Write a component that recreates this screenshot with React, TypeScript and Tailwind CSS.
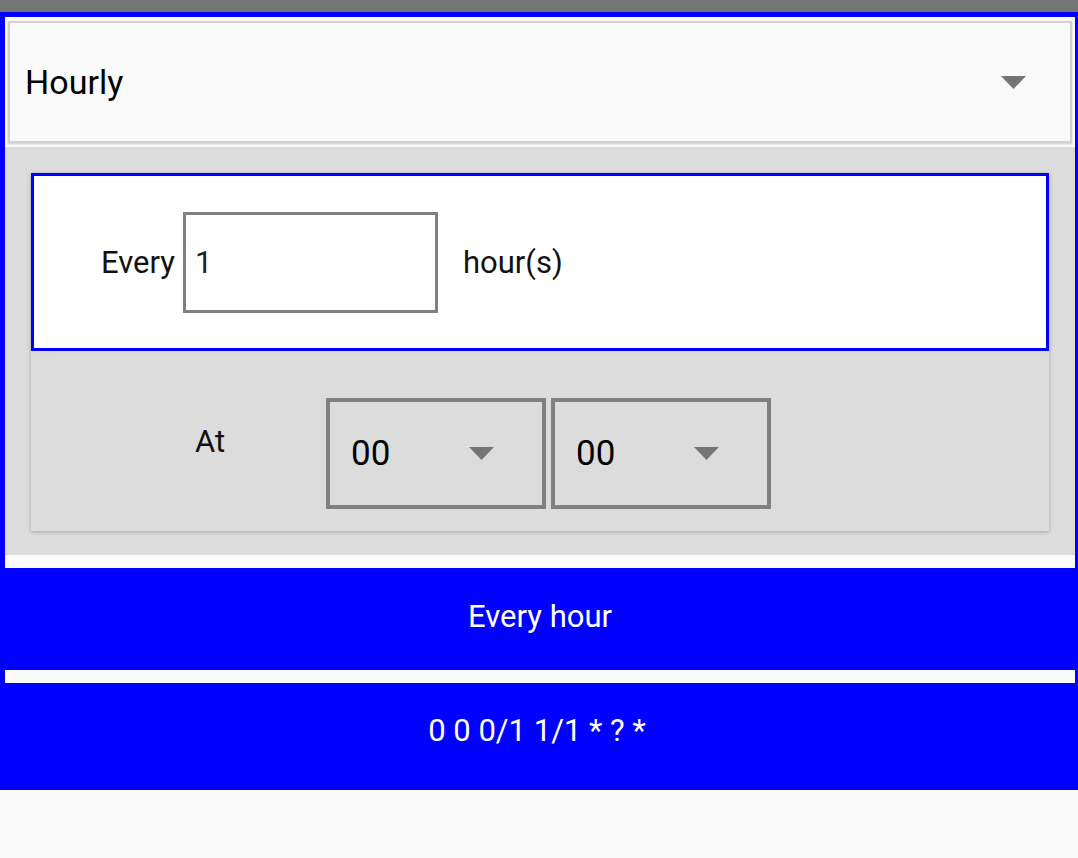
import React from "react";

function Caret({ className }: { className?: string }) {
  return (
    <svg width="25" height="13" viewBox="0 0 25 13" className={className}>
      <polygon points="0,0 25,0 12.5,13" fill="#757575" />
    </svg>
  );
}

export default function App() {
  return (
    <div className="min-h-[858px] w-[1078px] overflow-hidden bg-[#fafafa]" style={{ fontFamily: "Roboto, 'Noto Sans', sans-serif" }}>
      <div className="h-[12px] bg-[#757575]" />
      <div className="w-[1080px] border-[5px] border-[#0000ff] bg-[#fafafa]">
        {/* select */}
        <div className="px-[3px] pt-[4px] pb-[4px] bg-[#fafafa]">
          <div className="border-[2px] border-[#d0d0d0] shadow-[0_1px_2px_rgba(0,0,0,0.2)]">
            <div className="h-[118px] bg-[#fafafa] flex items-center justify-between pl-[15px] pr-[44px]">
              <span className="text-[34px] text-black leading-none">Hourly</span>
              <Caret />
            </div>
          </div>
        </div>
        {/* gray area */}
        <div className="bg-[#dcdcdc] px-[26px] pt-[26px] pb-[24px]">
          <div className="shadow-[0_1px_4px_rgba(0,0,0,0.25)]">
            <div className="h-[178px] bg-white border-[3px] border-[#0000ff] flex items-center">
              <span className="ml-[67px] text-[31px] text-[#111] leading-none">Every</span>
              <div className="ml-[8px] w-[255px] h-[101px] border-[3px] border-[#808080] bg-white flex items-center pl-[9px]">
                <span className="text-[31px] text-[#222] leading-none">1</span>
              </div>
              <span className="ml-[25px] text-[31px] text-[#111] leading-none">hour(s)</span>
            </div>
            <div className="h-[180px] bg-[#dcdcdc] flex items-start">
              <span className="ml-[164px] mt-[75px] text-[31px] text-[#111] leading-none">At</span>
              <div className="ml-[101px] mt-[47px] flex gap-[5px]">
                {[0, 1].map((i) => (
                  <div key={i} className="w-[220px] h-[111px] border-[4px] border-[#808080] flex items-center pl-[21px]">
                    <span className="text-[35px] text-black leading-none w-[118px]">00</span>
                    <Caret />
                  </div>
                ))}
              </div>
            </div>
          </div>
        </div>
        <div className="h-[13px] bg-[#fafafa]" />
        <div className="-mx-[5px] h-[102px] bg-[#0000ff] flex items-center justify-center pb-[6px]">
          <span className="text-[31px] text-white leading-none">Every hour</span>
        </div>
        <div className="h-[13px] bg-[#fafafa]" />
        <div className="-mx-[5px] h-[102px] bg-[#0000ff] flex items-center justify-center pb-[8px] pr-[6px]">
          <span className="text-[31px] text-white leading-none">0 0 0/1 1/1 * ? *</span>
        </div>
      </div>
    </div>
  );
}
